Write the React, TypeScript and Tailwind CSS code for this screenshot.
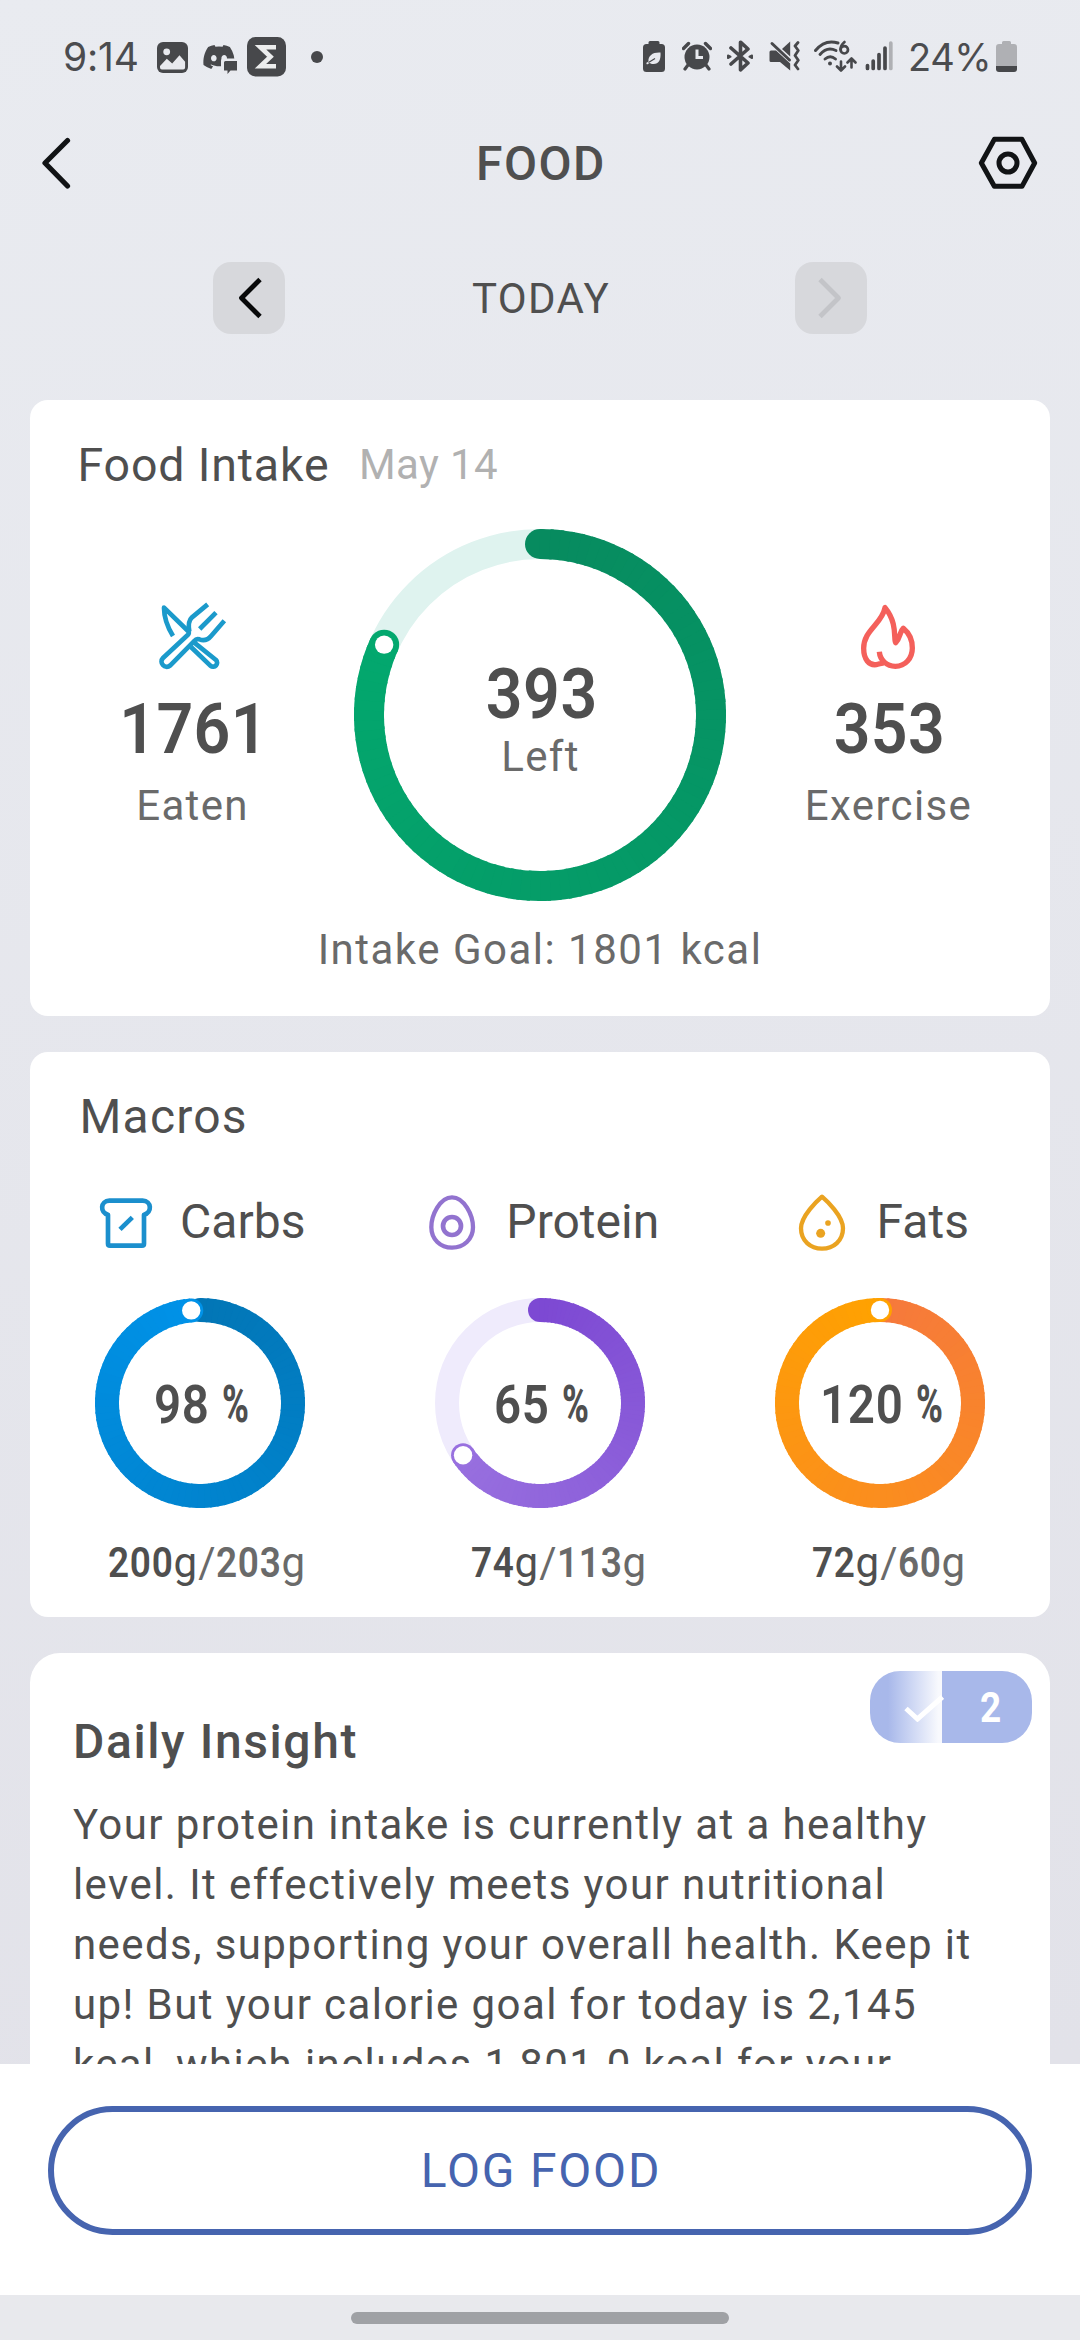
import React from "react";
import { FaDiscord } from "react-icons/fa";

const INK = "#47484b";

/* ---------- Status bar ---------- */

function StatusBar() {
  return (
    <div className="flex h-[112px] items-center pl-[63px] pr-[63px] font-[Inter,sans-serif] text-[39px] leading-[40px] text-[#4b4c4f]">
      <span className="w-[94px] pt-px tracking-[-0.2px]">9:14</span>
      <svg width="31" height="31" viewBox="157 42 31 31" className="mt-[3px]">
        <rect x="157" y="42" width="31" height="31" rx="6" fill={INK} />
        <circle cx="166.7" cy="51.8" r="3.4" fill="#e8e9ee" />
        <path d="M160 67.5V66l6.8-7.3 5.4 4.7 7.3-8.2 5.6 6.6v5.6a2 2 0 0 1-2 2h-21a2 2 0 0 1-2.100-2z" fill="#e8e9ee" />
      </svg>
      <span className="relative ml-[14px] mt-[3px] block h-[30px] w-[36px]">
        <FaDiscord className="h-[28px] w-[34px] text-[#47484b]" />
        <svg width="17" height="17" viewBox="0 0 17 17" className="absolute -bottom-[1px] right-0">
          <path d="M0 3.500a2 2 0 0 1 2-2h15V17H0z" fill="#e8e9ee" />
          <path d="M3 5.500a1.500 1.500 0 0 1 1.500-1.500H16v9.500H9.500L6.500 17v-3.500H3z" fill={INK} />
        </svg>
      </span>
      <svg width="39" height="40" viewBox="247 37 39 40" className="ml-[9px] mt-[1px]">
        <rect x="247" y="37" width="39" height="39.500" rx="8.500" fill={INK} />
        <path d="M276 47.300H260.500L270.500 56.700L260.500 66.200H276" fill="none" stroke="#eceded" strokeWidth="4.600" />
      </svg>
      <span className="ml-[25px] mt-[2px] h-[12px] w-[12px] rounded-full bg-[#47484b]" />

      <div className="ml-auto flex items-center">
        <svg width="22" height="31" viewBox="642 41 22 31">
          <path d="M649 41h8a1.500 1.500 0 0 1 1.500 1.500V44h2a3.500 3.500 0 0 1 3.500 3.500V68.500a3.500 3.500 0 0 1-3.500 3.500h-15a3.500 3.500 0 0 1-3.500-3.500V47.500a3.500 3.500 0 0 1 3.500-3.500h2v-1.500A1.500 1.500 0 0 1 649 41z" fill={INK} />
          <path d="M659.500 52.500c.5 7-1.500 11.500-7 11.500-2 0-3-.5-4-1l-2.500 1.500-.8-1.500 2.300-1.600c-.6-5.900 4.500-9.400 12-8.900z" fill="#e8e9ee" />
          <path d="M647.500 62.500l6.500-4" stroke={INK} strokeWidth="1.300" />
        </svg>
        <svg width="30" height="30" viewBox="681 42 30 30" className="ml-[17px]">
          <circle cx="696" cy="58" r="12.500" fill={INK} />
          <path d="M682.500 49.500l5-5M709.500 49.500l-5-5" stroke={INK} strokeWidth="3.400" strokeLinecap="round" />
          <path d="M687 66l-3 4M705 66l3 4" stroke={INK} strokeWidth="3.200" strokeLinecap="round" />
          <path d="M696 50.500V58.500H702" fill="none" stroke="#e8e9ee" strokeWidth="3" />
        </svg>
        <svg width="28" height="32" viewBox="725 40.500 28 32" className="ml-[14px]" fill="none" stroke={INK} strokeWidth="3.600" strokeLinejoin="round" strokeLinecap="round">
          <path d="M730 48.500L747 63.500L739.500 70.300V42.700L747 49.500L730 64.500" />
          <path d="M727 56l2.500 1.200-2.500 1.300zM751 56l-2.500 1.200 2.500 1.300z" strokeWidth="2" fill={INK} />
        </svg>
        <svg width="31" height="30" viewBox="767.500 42 31 30" className="ml-[15px]" fill={INK}>
          <path d="M769.500 51.500h5L788.700 64.500V71.500L778.500 63h-9a1.500 1.500 0 0 1-1.500-1.500v-8.500a1.500 1.500 0 0 1 1.500-1.500z" />
          <path d="M780.500 50L788.700 42.500V57.500z" />
          <path d="M770.500 44.500L788 61" stroke={INK} strokeWidth="3" strokeLinecap="round" />
          <path d="M796.500 43.500l-3 3.500 3.300 4.500-3.300 5 3.300 4.800-3.300 4.700 3 4" fill="none" stroke={INK} strokeWidth="2.800" strokeLinecap="round" strokeLinejoin="round" />
        </svg>
        <svg width="43" height="33" viewBox="813 41 43 33" className="ml-[14px]" fill="none" stroke={INK} strokeWidth="2.900" strokeLinecap="round">
          <path d="M814.500 51.500C821 43.500 829 41.500 837 44" />
          <path d="M819 55.500C824 49.500 830 49 835 51.500" />
          <path d="M824 60C827.500 57 831 57 834.500 60" />
          <circle cx="829" cy="64.500" r="2" fill={INK} stroke="none" />
          <path d="M843.500 43C840.500 45.500 839.500 48.500 839.500 50.500" strokeWidth="2.700" />
          <circle cx="843.300" cy="50.800" r="3.700" strokeWidth="2.700" />
          <path d="M840 62.500v8.500M836 67.500l4 4 4-4M850.500 68.500v-8.500M846.500 63.500l4-4 4 4" strokeWidth="2.600" strokeLinejoin="round" />
        </svg>
        <svg width="28" height="30" viewBox="864.500 42 28 30" className="ml-[8px]" stroke={INK} strokeWidth="3.700" strokeLinecap="round">
          <path d="M867 66.500v3M872.700 62v7.500M878.500 55.500v14M884.500 49v20.500" />
          <path d="M890.300 44v25.500" stroke="#afb0b4" />
        </svg>
        <span className="ml-[15px] w-[88px] pt-px text-[38px] tracking-[-0.400px]">24%</span>
        <svg width="21" height="31" viewBox="996 41 21 31">
          <path d="M1003.500 41h6a1.500 1.500 0 0 1 1.500 1.500V44h3a3 3 0 0 1 3 3V66h-21V47a3 3 0 0 1 3-3h3v-1.500a1.500 1.500 0 0 1 1.500-1.500z" fill="#afb0b4" />
          <path d="M996 66h21v3a3 3 0 0 1-3 3h-15a3 3 0 0 1-3-3z" fill={INK} />
        </svg>
      </div>
    </div>
  );
}

/* ---------- Header ---------- */

function Header() {
  return (
    <div className="flex h-[102px] items-center justify-between pl-[42px] pr-[42px]">
      <svg width="60" height="52" viewBox="42 137 60 52" fill="none" stroke="#111315" strokeWidth="5.200" strokeLinecap="round" strokeLinejoin="round">
        <path d="M67.500 140.500L45 163L67.500 186" />
      </svg>
      <h1 className="pl-[2px] pt-[2px] text-[48px] font-medium leading-[60px] tracking-[1.500px]">FOOD</h1>
      <svg width="60" height="56" viewBox="1134 405 180 168" fill="none" stroke="#111315" strokeWidth="15" strokeLinejoin="round">
        <path d="M1144 489L1183 418H1266L1304 489L1266 559H1183Z" />
        <circle cx="1224" cy="489" r="27" />
      </svg>
    </div>
  );
}

function DateSwitcher() {
  return (
    <div className="flex h-[168px] items-center justify-between px-[213px]">
      <button className="flex h-[72px] w-[72px] items-center justify-center rounded-[18px] bg-[#d7d8dc]">
        <svg width="26" height="42" viewBox="237 277 26 42" fill="none" stroke="#08090a" strokeWidth="4.800" strokeLinejoin="round">
          <path d="M261 279.500L242.500 298L261 316.500" />
        </svg>
      </button>
      <span className="pl-[2px] pt-[2px] text-[42px] leading-[50px] tracking-[1.350px]">TODAY</span>
      <button className="flex h-[72px] w-[72px] items-center justify-center rounded-[18px] bg-[#d7d8dc]">
        <svg width="26" height="42" viewBox="237 277 26 42" fill="none" stroke="#c3c4c8" strokeWidth="4.800" strokeLinejoin="round" className="-scale-x-100">
          <path d="M261 279.500L242.500 298L261 316.500" />
        </svg>
      </button>
    </div>
  );
}

/* ---------- Progress ring with an angular gradient ---------- */

type RGB = [number, number, number];

function Ring({ size, stroke, value, from, to, track }: { size: number; stroke: number; value: number; from: RGB; to: RGB; track: string }) {
  const c = size / 2;
  const r = c - stroke / 2;
  const steps = 90;
  const at = (t: number) => {
    const a = t * 2 * Math.PI;
    return [c + r * Math.sin(a), c - r * Math.cos(a)];
  };
  const mix = (k: number) => `rgb(${from.map((v, i) => Math.round(v + (to[i] - v) * k)).join(",")})`;
  const [ex, ey] = at(value);
  return (
    <svg width={size} height={size} viewBox={`0 0 ${size} ${size}`} fill="none">
      <circle cx={c} cy={c} r={r} stroke={track} strokeWidth={stroke} />
      <circle cx={c} cy={c - r} r={stroke / 2} fill={mix(0)} />
      {Array.from({ length: steps }, (_, i) => {
        const [x1, y1] = at((value * i) / steps);
        const [x2, y2] = at(Math.min(value, (value * (i + 1.3)) / steps));
        return <path key={i} d={`M${x1} ${y1}A${r} ${r} 0 0 1 ${x2} ${y2}`} stroke={mix(i / steps)} strokeWidth={stroke} />;
      })}
      <circle cx={ex} cy={ey} r={stroke / 2} fill={mix(1)} />
      <circle cx={ex} cy={ey} r="9.200" fill="#fff" />
    </svg>
  );
}

/* ---------- Food intake ---------- */

function UtensilsIcon() {
  return (
    <svg width="72" height="72" viewBox="290 300 216 216" fill="none" stroke="#1b9acb" strokeWidth="14" strokeLinejoin="round">
      <path d="M341 408C327 385 314 352 314 323L386 393Q391 399 385 405L311 474C298 487 316 510 333 496L406 422Q411 415 420 418C436 424 447 418 456 407L495 362" />
      <path d="M445 313L398 352C387 362 386 374 390 395" />
      <path d="M470 338L421 387" />
      <path d="M404 427L470 480C480 490 466 507 453 497L395 441" />
    </svg>
  );
}

function FlameIcon() {
  return (
    <svg width="72" height="72" viewBox="936 300 216 216" fill="none" stroke="#f4605b" strokeWidth="16" strokeLinejoin="round">
      <path d="M1018 455C1020 480 1040 499 1066 499C1096 499 1117 475 1117 444C1117 418 1106 398 1090 385C1078 396 1082 412 1067 428C1060 420 1074 370 1035 323C1026 372 971 390 971 445C971 478 987 497 1009 494C1020 492 1026 487 1034 490" />
    </svg>
  );
}

function Stat({ icon, value, label }: { icon: React.ReactNode; value: string; label: string }) {
  return (
    <div className="flex w-[324px] flex-col items-center pt-[71px]">
      {icon}
      <span className="scale-x-[0.92] pl-[4px] text-[70px] font-semibold leading-[114px] tracking-[0.400px]">{value}</span>
      <span className="pl-px text-[42px] leading-[40px] tracking-[1.350px] text-[#6a6a6a]">{label}</span>
    </div>
  );
}

function FoodIntakeCard() {
  return (
    <section className="h-[616px] rounded-[18px] bg-white">
      <div className="pt-[16px] pl-[47.500px]">
        <div className="flex h-[96px] items-center pt-[2px]">
          <h2 className="w-[281.500px] text-[46.500px] leading-[60px] tracking-[0.850px]">Food Intake</h2>
          <span className="text-[42px] leading-[60px] tracking-[0.400px] text-[#b1b1b1]">May 14</span>
        </div>
      </div>
      <div className="mt-[17px] flex h-[372px]">
        <Stat icon={<UtensilsIcon />} value="1761" label="Eaten" />
        <div className="relative h-[372px] w-[372px]">
          <Ring size={372} stroke={30} value={0.8175} from={[7, 139, 95]} to={[3, 168, 110]} track="#dff3ef" />
          <div className="absolute inset-0 flex flex-col items-center pt-[129px]">
            <span className="scale-x-[0.92] pl-[4px] text-[70px] font-semibold leading-[72px] tracking-[0.600px]">393</span>
            <span className="pl-[1px] text-[42px] leading-[54px] tracking-[1.350px] text-[#6a6a6a]">Left</span>
          </div>
        </div>
        <Stat icon={<FlameIcon />} value="353" label="Exercise" />
      </div>
      <p className="mt-px text-center text-[42px] leading-[96px] tracking-[1.500px] text-[#6a6a6a]">Intake Goal: 1801 kcal</p>
    </section>
  );
}

/* ---------- Macros ---------- */

function CarbsIcon() {
  return (
    <svg width="60" height="60" viewBox="108 33 180 180" fill="none" stroke="#1b8fcd" strokeWidth="14" strokeLinejoin="round">
      <path d="M148 62H248C275 62 277 98 252 104V191Q252 197 246 197H150Q144 197 144 191V104C119 98 121 62 148 62Z" />
      <path d="M180 148L217 112" />
    </svg>
  );
}

function ProteinIcon() {
  return (
    <svg width="60" height="60" viewBox="1086 33 180 180" fill="none" stroke="#9273cf" strokeWidth="13">
      <path d="M1176 52C1212 52 1239 105 1239 142C1239 178 1211 203 1176 203C1141 203 1114 178 1114 142C1114 105 1140 52 1176 52Z" />
      <circle cx="1176" cy="138" r="27" strokeWidth="14" />
    </svg>
  );
}

function FatsIcon() {
  return (
    <svg width="60" height="60" viewBox="753 33 180 180" fill="none" stroke="#eaa321" strokeWidth="13" strokeLinejoin="round">
      <path d="M843 50C829 62 780 108 780 145C780 182 808 206 843 206C878 206 906 182 906 145C906 108 857 62 843 50Z" />
      <circle cx="839" cy="160" r="13.500" fill="#eaa321" stroke="none" />
      <circle cx="861" cy="129" r="8.500" fill="#eaa321" stroke="none" />
    </svg>
  );
}

/* Narrow numerals: squeezed horizontally, with the freed advance given back. */
function Digits({ text, advance }: { text: string; advance: number }) {
  return (
    <span className="inline-block origin-left scale-x-[0.88] font-semibold tracking-[0.800px]" style={{ marginRight: -0.12 * advance * text.length }}>
      {text}
    </span>
  );
}

type MacroProps = { icon: React.ReactNode; label: string; percent: string; ring: React.ReactNode; eaten: string; goal: string; amountClass: string };

function Macro({ icon, label, percent, ring, eaten, goal, amountClass }: MacroProps) {
  return (
    <div className="flex flex-col items-center">
      <div className="flex h-[114px] items-center gap-[24.500px] pl-px">
        {icon}
        <span className="pt-[2px] text-[48px] leading-[60px]">{label}</span>
      </div>
      <div className="relative mt-[20px] h-[210px] w-[210px]">
        {ring}
        <div className="absolute inset-0 flex items-center justify-center pl-[4px] pt-[3px] text-[54px] leading-[60px]">
          <Digits text={percent} advance={31.6} />
          <span className="-mr-[11px] ml-[12px] origin-left scale-x-[0.7] text-[52px] font-extrabold">%</span>
        </div>
      </div>
      <p className={amountClass}>
        <Digits text={eaten} advance={24.8} />
        <span className="tracking-[1.100px]">g</span>
        <span className="text-[#6a6a6a]">
          <span className="tracking-[0.400px]">/</span>
          <Digits text={goal} advance={24.8} />g
        </span>
      </p>
    </div>
  );
}

function MacrosCard() {
  return (
    <section className="mt-[36px] h-[565px] rounded-[18px] bg-white pt-[16px]">
      <h2 className="h-[96px] pl-[49.500px] text-[48px] leading-[98px] tracking-[1.200px]">Macros</h2>
      <div className="grid grid-cols-3">
        <Macro
          icon={<CarbsIcon />}
          label="Carbs"
          percent="98"
          ring={<Ring size={210} stroke={24} value={0.985} from={[2, 118, 182]} to={[0, 146, 232]} track="#e1f1fb" />}
          eaten="200"
          goal="203"
          amountClass="pl-[13px] text-[42px] leading-[110px]"
        />
        <Macro
          icon={<ProteinIcon />}
          label="Protein"
          percent="65"
          ring={<Ring size={210} stroke={24} value={0.655} from={[125, 73, 211]} to={[152, 112, 223]} track="#efebfc" />}
          eaten="74"
          goal="113"
          amountClass="pl-[37px] text-[42px] leading-[110px]"
        />
        <Macro
          icon={<FatsIcon />}
          label="Fats"
          percent="120"
          ring={<Ring size={210} stroke={24} value={1} from={[246, 121, 60]} to={[255, 162, 0]} track="#fff3e0" />}
          eaten="72"
          goal="60"
          amountClass="pl-[17px] text-[42px] leading-[110px]"
        />
      </div>
    </section>
  );
}

/* ---------- Daily insight ---------- */

const insight = [
  "Your protein intake is currently at a healthy",
  "level. It effectively meets your nutritional",
  "needs, supporting your overall health. Keep it",
  "up! But your calorie goal for today is 2,145",
  "kcal, which includes 1,801.0 kcal for your",
];

function InsightCard() {
  return (
    <section className="relative mt-[36px] h-[480px] rounded-[30px] bg-white pl-[43px] pt-[38.500px]">
      <div className="absolute right-[18px] top-[18px] flex h-[72px] w-[162px] overflow-hidden rounded-[30px]">
        <div className="w-[72px] bg-linear-to-r from-[#a8b8ea] from-25% to-[#f8f9fd] to-95%" />
        <div className="flex flex-1 items-center bg-[#a8b8ea] pl-[37.500px] pt-[2px] text-[42px] font-bold leading-[60px] text-white">
          <span className="inline-block origin-left scale-x-[0.88]">2</span>
        </div>
        <svg width="40" height="28" viewBox="904 1693 40 28" fill="none" stroke="#fff" strokeWidth="5" className="absolute left-[34px] top-[23px]">
          <path d="M906 1707.500L917.500 1718L942.500 1696" />
        </svg>
      </div>
      <h2 className="text-[48px] font-medium leading-[100px] tracking-[1.600px]">Daily Insight</h2>
      <p className="mt-[3.500px] whitespace-nowrap text-[42px] leading-[60px] tracking-[1.410px]">
        {insight.map((line) => (
          <span key={line} className="block">{line}</span>
        ))}
      </p>
    </section>
  );
}

export default function App() {
  return (
    <div className="flex h-[2340px] w-[1080px] flex-col overflow-hidden bg-[#e8e9ed] font-[Roboto,sans-serif] text-[#4f4f4f]">
      <div className="h-[2064px] overflow-hidden bg-linear-170 from-[#e9ebf0] to-[#e2e2e9]">
        <StatusBar />
        <Header />
        <DateSwitcher />
        <main className="px-[30px] pt-[18px]">
          <FoodIntakeCard />
          <MacrosCard />
          <InsightCard />
        </main>
      </div>
      <div className="h-[231px] bg-white px-[48px] pt-[42px]">
        <button className="flex h-[129px] w-full items-center justify-center rounded-full border-[6px] border-[#4664af] pl-[2px] text-[48px] leading-[60px] tracking-[1.800px] text-[#4664af]">
          LOG FOOD
        </button>
      </div>
      <div className="flex h-[45px] justify-center pt-[17px]">
        <div className="h-[12px] w-[378px] rounded-full bg-[#9fa1a5]" />
      </div>
    </div>
  );
}
